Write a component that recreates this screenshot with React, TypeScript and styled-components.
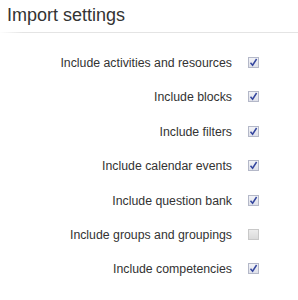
import React from 'react'
import styled, { createGlobalStyle } from 'styled-components'

const GlobalStyle = createGlobalStyle`
  body {
    margin: 0;
    background: #ffffff;
    font-family: "Liberation Sans", Arial, sans-serif;
  }
`

const Panel = styled.div`
  width: 298px;
  height: 300px;
  overflow: hidden;
  background: #ffffff;
`

const Title = styled.h2`
  margin: 0;
  padding: 5px 0 0 7px;
  height: 27px;
  line-height: 20px;
  font-size: 18px;
  font-weight: normal;
  color: #333333;
  border-bottom: 1px solid;
  border-image: linear-gradient(to right, #ffffff, #e4e4e4 8%, #e4e4e4) 1;
`

const List = styled.div`
  display: flex;
  flex-direction: column;
  gap: 19.4px;
  padding-top: 23px;
`

const Row = styled.label`
  display: grid;
  grid-template-columns: 232px 11px;
  column-gap: 16px;
  align-items: center;
  height: 15px;
`

const Label = styled.span`
  text-align: right;
  font-size: 12.3px;
  line-height: 15px;
  color: #333333;
`

const Box = styled.span<{ $checked: boolean }>`
  box-sizing: border-box;
  width: 11px;
  height: 11px;
  margin-top: -2px;
  border: 1px solid ${p => (p.$checked ? '#b4b8c8' : '#c8c8c8')};
  background: ${p =>
    p.$checked ? 'linear-gradient(#f2f3f7, #dfe1ea)' : 'linear-gradient(#ececec, #dadada)'};
  display: flex;
  align-items: center;
  justify-content: center;
`

const items: [string, boolean][] = [
  ['Include activities and resources', true],
  ['Include blocks', true],
  ['Include filters', true],
  ['Include calendar events', true],
  ['Include question bank', true],
  ['Include groups and groupings', false],
  ['Include competencies', true],
]

const App = () => (
  <Panel>
    <GlobalStyle />
    <Title>Import settings</Title>
    <List>
      {items.map(([text, checked]) => (
        <Row key={text}>
          <Label>{text}</Label>
          <Box $checked={checked}>
            {checked && (
              <svg width="9" height="9" viewBox="0 0 9 9">
                <path d="M1.5 4.8 L3.6 7.2 L7.6 1" fill="none" stroke="#34469e" strokeWidth="1.5" />
              </svg>
            )}
          </Box>
        </Row>
      ))}
    </List>
  </Panel>
)

export default App
